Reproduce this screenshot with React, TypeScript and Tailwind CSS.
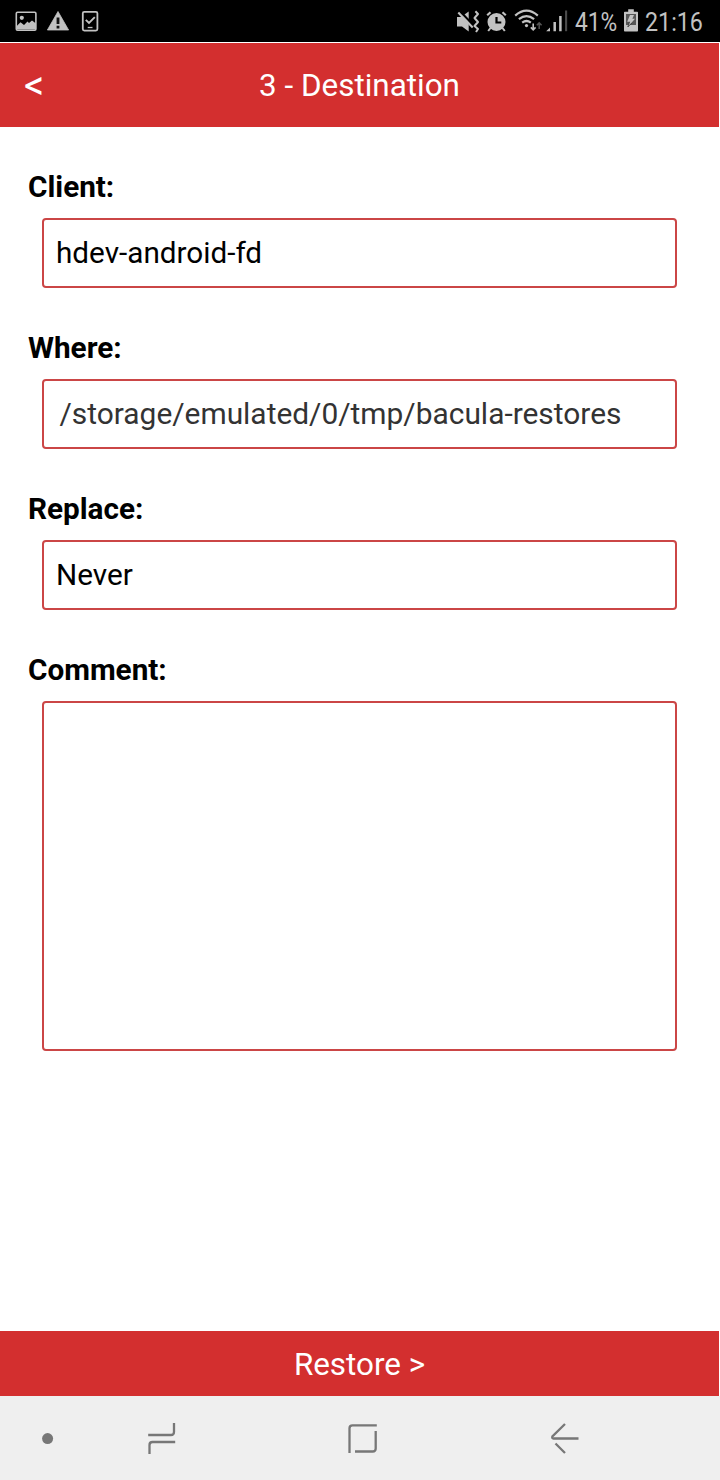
import type { ReactNode } from 'react';

function NotificationIcons() {
  return (
    <svg width="110" height="42" viewBox="0 0 110 42" fill="none" stroke="#c2c2c2" aria-hidden="true">
      <rect x="16.3" y="12.3" width="19.6" height="18" rx="1.2" strokeWidth="1.6" />
      <circle cx="21.8" cy="17.8" r="2.1" fill="#c2c2c2" stroke="none" />
      <path d="M17 29V25.8L20.5 22.3L24 25L27.5 21.5L29 23L32 20.5L36 23.5V29.5H17Z" fill="#c2c2c2" stroke="none" />
      <path d="M58 11.5L68.6 30H47.4Z" fill="#c2c2c2" strokeWidth="0.8" strokeLinejoin="round" />
      <path d="M58 17.5V24M58 25.7V28.5" stroke="#111" strokeWidth="2.8" />
      <rect x="82.8" y="11.8" width="14.6" height="18.8" rx="1.5" strokeWidth="1.8" />
      <path d="M85.8 19.8L89 23L94.8 17.2" strokeWidth="1.9" />
      <path d="M87.7 27.5H92.5" strokeWidth="1.3" />
    </svg>
  );
}

function SystemIcons() {
  return (
    <svg width="120" height="42" viewBox="454 0 120 42" fill="none" stroke="#c2c2c2" aria-hidden="true">
      <path d="M457 17H461L468.7 11.5V31.5L462 26.5H457Z" fill="#c2c2c2" stroke="none" />
      <path d="M459.5 10.8L473.5 25.5" stroke="#000" strokeWidth="2.4" />
      <path d="M458.3 12.5L472.7 27.5" strokeWidth="2.1" />
      <path d="M475.4 11.2L478 14L474.5 18L478 22L474.5 26L478 29L476 32" strokeWidth="2" strokeLinejoin="round" />
      <circle cx="496.5" cy="22" r="9" fill="#c2c2c2" stroke="none" />
      <path d="M487.2 15.2L490.5 12.2M502.5 12.2L505.8 15.2" strokeWidth="2.2" />
      <path d="M490.5 28L488.2 31M502.5 28L504.8 31" strokeWidth="2" />
      <path d="M496.5 17V22.5H501.3" stroke="#000" strokeWidth="2.2" />
      <path d="M515.2 15.6Q526.5 5.8 537.8 15.6M518.9 19.2Q526.5 13 534.1 19.2M522.2 22.6Q526.5 19.4 530.8 22.6" strokeWidth="2.2" />
      <circle cx="526.5" cy="25.6" r="1.6" fill="#c2c2c2" stroke="none" />
      <path d="M533.2 23.5V29.8M530.8 27.4L533.2 29.8L535.6 27.4" strokeWidth="1.6" />
      <path d="M539.2 29V23M536.8 25.3L539.2 22.9L541.6 25.3" stroke="#555" strokeWidth="1.5" />
      <path d="M546.2 31.2L550 27.4V31.2Z" fill="#c2c2c2" stroke="none" />
      <path d="M554.7 31.2V22M560.4 31.2V16" strokeWidth="2.5" />
      <path d="M566.1 31.2V10.5" stroke="#4c4c4c" strokeWidth="2.1" />
    </svg>
  );
}

function BatteryIcon() {
  return (
    <svg width="16" height="42" viewBox="623 0 16 42" aria-hidden="true">
      <path d="M628.2 9.3H633.8V11.8H637.2Q638 11.8 638 12.6V30.6Q638 31.5 637.2 31.5H624.8Q624 31.5 624 30.6V12.6Q624 11.8 624.8 11.8H628.2Z" fill="#c2c2c2" />
      <path d="M626 14H636V25H626Z" fill="#555" />
      <path d="M630 15H634L632.4 18.8H635L627.8 27L629.6 21.8H627.2Z" fill="#c2c2c2" />
      <path d="M629.6 21.8L627.8 27L632 22.8" fill="none" stroke="#333" strokeWidth="0.8" />
    </svg>
  );
}

function StatusBar() {
  return (
    <div className="flex h-[42px] shrink-0 justify-between bg-black text-[#c2c2c2]">
      <NotificationIcons />
      <div className="flex w-[266px] items-center">
        <SystemIcons />
        <span className="ml-[1px] block w-[48px] origin-left scale-x-[0.91] pt-[2px] text-[25px] leading-none">41%</span>
        <BatteryIcon />
        <span className="ml-[6px] block origin-left scale-x-[0.93] whitespace-nowrap pt-[2px] text-[25px] leading-none">21:16</span>
      </div>
    </div>
  );
}

function Field({ label, children, tall = false }: { label: string; children?: ReactNode; tall?: boolean }) {
  return (
    <div>
      <div className="h-[50px] pt-px text-[29.7px] leading-[36px] font-bold text-black">{label}</div>
      <div
        className={`ml-[14px] w-[635px] rounded-[4px] border-2 border-[#cb4646] bg-white ${tall ? 'h-[350px]' : 'flex h-[70px] items-center pt-px'}`}
      >
        {children}
      </div>
    </div>
  );
}

function NavigationBar() {
  return (
    <div className="h-[84px] shrink-0 bg-[#efefef]">
      <svg width="720" height="84" viewBox="0 1396 720 84" fill="none" stroke="#777" strokeWidth="2.3" aria-hidden="true">
        <circle cx="47.6" cy="1438.6" r="5.5" fill="#777" stroke="none" />
        <path d="M148.2 1435H171Q174 1435 174 1432V1423M175.2 1442H152.5Q149.5 1442 149.5 1445V1454" />
        <path d="M376.8 1425.3H352.5Q349.5 1425.3 349.5 1428.3V1453M375.7 1431V1448.5Q375.7 1451.5 372.7 1451.5H355" />
        <path d="M565 1424L552.4 1436.4Q551.7 1438.4 553.5 1438.5H578.5M555.5 1443.5L565 1453" />
      </svg>
    </div>
  );
}

export default function App() {
  return (
    <div className="flex h-[1480px] w-[720px] flex-col overflow-hidden bg-white font-['Roboto',sans-serif]">
      <StatusBar />
      <header className="mt-px grid h-[84px] w-[719px] shrink-0 grid-cols-[100px_1fr_100px] items-center bg-[#d32f2f] text-white">
        <button className="pt-px pl-[24px] text-left text-[40px] leading-none font-normal">&lt;</button>
        <h1 className="pt-px text-center text-[31.4px] leading-none">3 - Destination</h1>
      </header>
      <main className="flex flex-1 flex-col gap-[41px] px-[28px] pt-[41px]">
        <Field label="Client:">
          <span className="pl-[12px] text-[29.7px] text-black">hdev-android-fd</span>
        </Field>
        <Field label="Where:">
          <span className="pl-[15.5px] text-[29.9px] text-[#333]">/storage/emulated/0/tmp/bacula-restores</span>
        </Field>
        <Field label="Replace:">
          <span className="pl-[12px] text-[29.7px] text-black">Never</span>
        </Field>
        <Field label="Comment:" tall />
      </main>
      <button className="h-[65px] w-[719px] shrink-0 bg-[#d32f2f] pt-[3px] text-[31.4px] text-white">Restore &gt;</button>
      <NavigationBar />
    </div>
  );
}
